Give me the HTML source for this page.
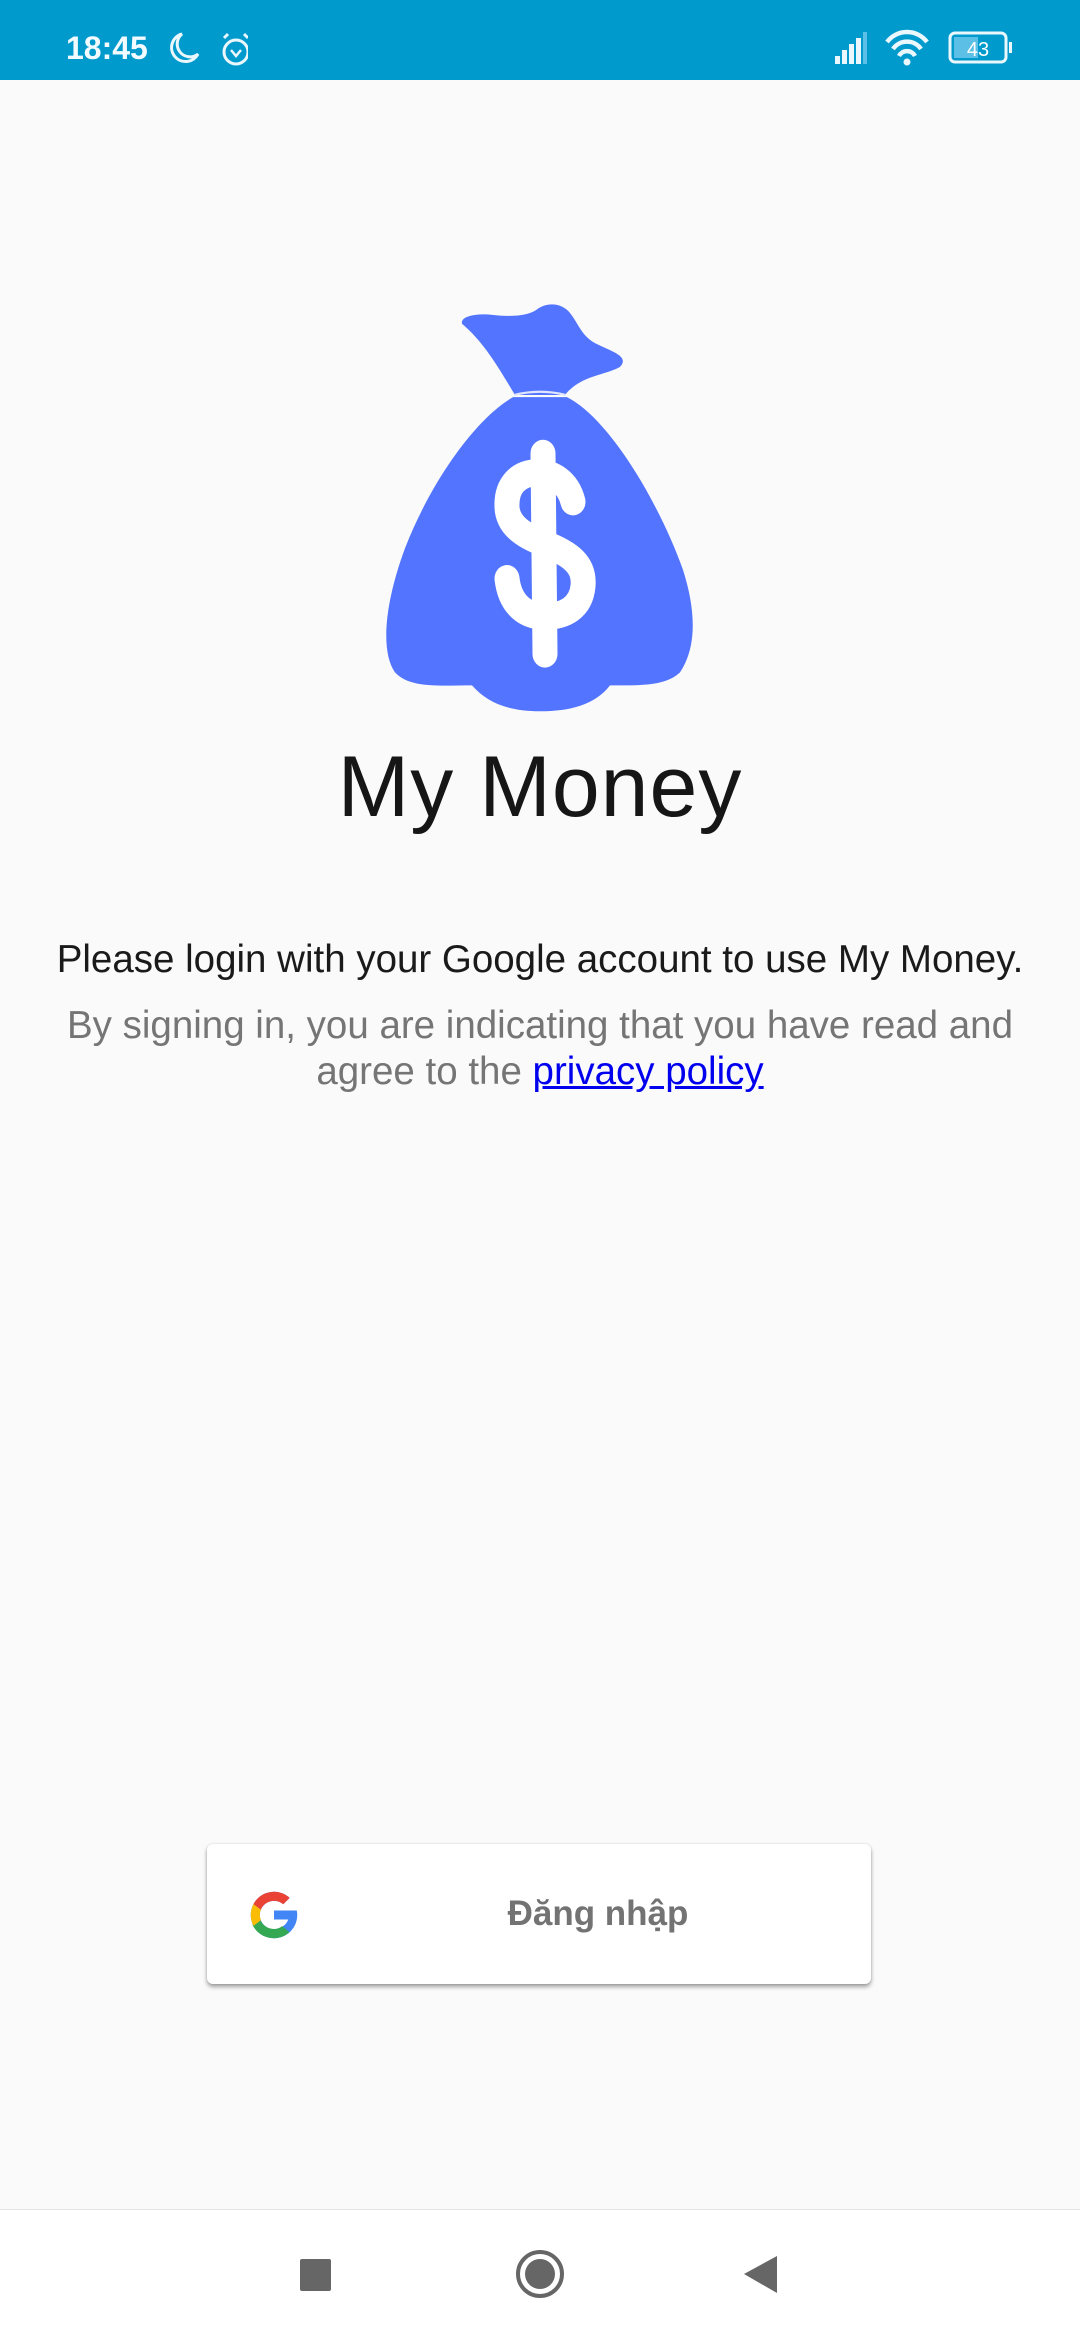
<!DOCTYPE html>
<html><head><meta charset="utf-8"><style>
*{margin:0;padding:0;box-sizing:border-box}
body{width:1080px;height:2340px;background:#fafafa;font-family:"Liberation Sans",sans-serif;position:relative;overflow:hidden}
.sb{position:absolute;left:0;top:0;width:1080px;height:80px;background:#009acd;color:#e8f6fc}
.abs{position:absolute}
.t{position:absolute;left:0;width:1080px;text-align:center;font-size:38.5px}
.btn{position:absolute;left:207px;top:1844px;width:664px;height:140px;background:#fff;border-radius:6px;box-shadow:0 3px 4px rgba(0,0,0,.35),0 0 2px rgba(0,0,0,.15)}
.nav{position:absolute;left:0;top:2209px;width:1080px;height:131px;background:#fff;border-top:1px solid #e4e4e4}
</style></head><body>
<div class="sb">
<div class="abs" style="left:66px;top:30px;font-size:32px;font-weight:bold;color:#f2fbff">18:45</div>
<svg class="abs" style="left:168px;top:30px" width="80" height="40" viewBox="0 0 80 40">
<path d="M14 4 A14 14 0 1 0 30 24 A12 12 0 0 1 14 4Z" fill="none" stroke="#eaf7fc" stroke-width="3"/>
<circle cx="68" cy="22" r="12" fill="none" stroke="#eaf7fc" stroke-width="3"/>
<path d="M63 20 L68 26 L73 20" fill="none" stroke="#eaf7fc" stroke-width="2.5"/>
<path d="M56 8 L60 4 M80 8 L76 4" stroke="#eaf7fc" stroke-width="3"/>
</svg>
<svg class="abs" style="left:832px;top:28px" width="190" height="40" viewBox="0 0 190 40">
<rect x="3" y="28" width="5" height="8" fill="#eaf7fc"/><rect x="10" y="22" width="5" height="14" fill="#eaf7fc"/><rect x="17" y="16" width="5" height="20" fill="#eaf7fc"/><rect x="24" y="10" width="5" height="26" fill="#eaf7fc"/><rect x="31" y="4" width="4" height="32" fill="#5cc0e6"/>
<path d="M55 14 A25 25 0 0 1 95 14 M61 21 A17 17 0 0 1 89 21 M67 28 A9 9 0 0 1 83 28" fill="none" stroke="#eaf7fc" stroke-width="4.5"/>
<circle cx="75" cy="34" r="3.5" fill="#eaf7fc"/>
<rect x="118" y="5" width="56" height="29" rx="5" fill="none" stroke="#eaf7fc" stroke-width="3"/>
<rect x="122" y="9" width="24" height="21" fill="#5cc0e6"/>
<rect x="177" y="14" width="3" height="11" fill="#eaf7fc"/>
<text x="146" y="28" font-size="20" fill="#fff" text-anchor="middle" font-family="Liberation Sans">43</text>
</svg>
</div>

<svg class="abs" style="left:380px;top:300px" width="320" height="448" viewBox="0 0 320 415" preserveAspectRatio="none">
<path d="M82 22 C80 14 100 12 115 14 C135 16 150 14 158 8 C168 2 180 3 188 10 C198 20 200 32 215 40 C232 48 250 52 240 62 C225 70 200 70 185 88 L135 88 C120 65 105 40 82 22Z" fill="#5274fe"/>
<path d="M133 90 L187 90 C230 110 280 190 303 250 C315 285 318 320 300 345 C285 358 260 357 230 357 C215 375 190 381 160 381 C130 381 108 374 92 357 C60 357 30 360 15 345 C0 325 5 280 25 230 C50 170 95 110 133 90Z" fill="#5274fe"/>
<path d="M134 88 Q160 82 186 88" stroke="#dfe5ff" stroke-width="2" fill="none"/>
<g stroke="#fff" stroke-width="25" fill="none" stroke-linecap="round">
<line x1="163" y1="142" x2="165" y2="328"/>
<path d="M193 187 C188 168 172 160 158 160 C138 160 126 172 127 192 C128 212 150 220 165 226 C190 235 205 245 203 265 C201 285 185 293 165 293 C145 293 130 282 127 258"/>
</g>
</svg>
<div class="abs" style="left:0;width:1080px;top:738px;text-align:center;font-size:86px;color:#161616;letter-spacing:1px">My Money</div>

<div class="t" style="top:938px;color:#1a1a1a">Please login with your Google account to use My Money.</div>
<div class="t" style="top:1003px;color:#757575;line-height:46px">By signing in, you are indicating that you have read and<br>agree to the <span style="color:#0000ee;text-decoration:underline">privacy policy</span></div>

<div class="btn">
<svg class="abs" style="left:43px;top:47px" width="48" height="48" viewBox="5 5 38 38">
<path d="M43.6 20.5H42V20.4H24v7.2h11.3C33.7 32.1 29.2 35.2 24 35.2c-6.2 0-11.2-5-11.2-11.2S17.8 12.8 24 12.8c2.8 0 5.3 1 7.3 2.7l5.1-5.1C33.2 7.5 28.8 5.6 24 5.6 13.8 5.6 5.6 13.8 5.6 24S13.8 42.4 24 42.4 42.4 34.2 42.4 24c0-1.2-.1-2.4-.4-3.5z" fill="#4285f4"/>
<path d="M7.7 15.4l5.9 4.3C15.2 15.8 19.3 12.8 24 12.8c2.8 0 5.3 1 7.3 2.7l5.1-5.1C33.2 7.5 28.8 5.6 24 5.6c-7.1 0-13.2 4-16.3 9.8z" fill="#ea4335"/>
<path d="M24 42.4c4.7 0 9-1.8 12.2-4.8l-5.7-4.8c-1.8 1.4-4.1 2.3-6.5 2.3-5.2 0-9.6-3.3-11.2-8l-5.9 4.5C9.9 38.2 16.4 42.4 24 42.4z" fill="#34a853"/>
<path d="M12.8 24c0-1.5.3-2.9.8-4.3l-5.9-4.3C6.4 18 5.6 20.9 5.6 24s.8 6 2.2 8.6l5.9-4.5c-.6-1.3-.9-2.7-.9-4.1z" fill="#fbbc05"/>
</svg>
<div class="abs" style="left:0;width:664px;top:50px;text-align:center;font-size:35px;font-weight:bold;color:#737373;padding-left:118px">Đăng nhập</div>
</div>

<div class="nav">
<div class="abs" style="left:300px;top:49px;width:31px;height:32px;background:#666;border-radius:2px"></div>
<div class="abs" style="left:516px;top:40px;width:48px;height:48px;border:4px solid #666;border-radius:50%"></div>
<div class="abs" style="left:525px;top:49px;width:30px;height:30px;background:#666;border-radius:50%"></div>
<svg class="abs" style="left:743px;top:45px" width="36" height="40"><path d="M1 19 L34 1 L34 38Z" fill="#666"/></svg>
</div>
</body></html>
